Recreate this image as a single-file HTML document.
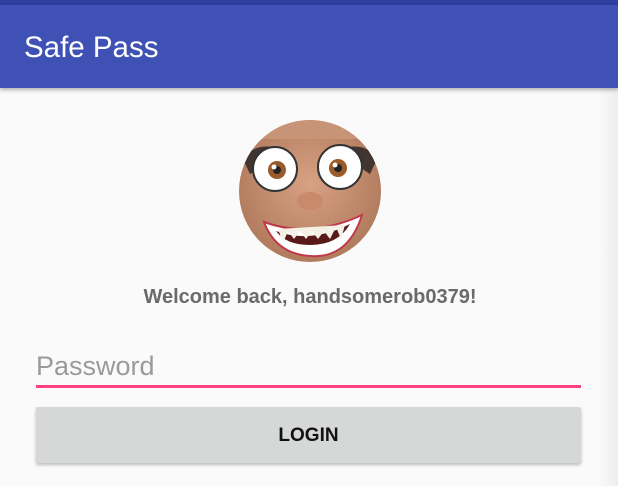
<!DOCTYPE html>
<html><head><meta charset="utf-8"><style>
html,body{margin:0;padding:0}
body{width:618px;height:486px;overflow:hidden;background:#fafafa;position:relative;font-family:"Liberation Sans",Roboto,sans-serif}
.sb{position:absolute;left:0;top:0;width:618px;height:5px;background:#303f9f}
.tb{position:absolute;left:0;top:5px;width:618px;height:83px;background:#3f51b5;box-shadow:0 2px 4px rgba(0,0,0,.3)}
.tb span{position:absolute;left:24px;top:26px;color:#fff;font-size:29.5px}
.edge{position:absolute;right:0;top:88px;width:20px;height:398px;background:linear-gradient(to right,rgba(0,0,0,0),rgba(0,0,0,.05))}
.wel{position:absolute;left:0;width:620px;top:286px;text-align:center;font-weight:bold;font-size:20px;color:#6a6a6a}
.pw{position:absolute;left:36px;top:351px;font-size:27px;color:#9a9a9a}
.line{position:absolute;left:36px;top:385px;width:545px;height:3px;background:#ff4081}
.btn{position:absolute;left:36px;top:407px;width:545px;height:56px;background:#d6d7d7;border-radius:2px;box-shadow:0 2px 3px rgba(0,0,0,.25);text-align:center;line-height:57px;font-size:19px;font-weight:bold;color:#111}
</style></head><body>
<div class="sb"></div>
<div class="tb"><span>Safe Pass</span></div>
<div class="edge"></div>
<svg style="position:absolute;left:238px;top:119px" width="144" height="144" viewBox="0 0 144 144">
<defs><radialGradient id="g" cx="50%" cy="45%" r="55%"><stop offset="0" stop-color="#d9a184"/><stop offset="1" stop-color="#b07a5c"/></radialGradient><clipPath id="c"><circle cx="72" cy="72" r="71"/></clipPath></defs>
<g clip-path="url(#c)">
<rect width="144" height="144" fill="url(#g)"/>
<rect x="0" y="0" width="144" height="20" fill="#c89478"/>
<path d="M5 40 Q15 25 35 28 Q30 45 12 55Z" fill="#222" opacity=".8"/>
<path d="M139 40 Q130 25 110 28 Q115 45 132 55Z" fill="#222" opacity=".8"/>
<circle cx="37" cy="50" r="22" fill="#fff" stroke="#333" stroke-width="2"/>
<circle cx="102" cy="48" r="22" fill="#fff" stroke="#333" stroke-width="2"/>
<circle cx="39" cy="51" r="9" fill="#9a5a2a"/><circle cx="39" cy="51" r="4" fill="#222"/><circle cx="36" cy="48" r="2.5" fill="#fff"/>
<circle cx="100" cy="49" r="9" fill="#9a5a2a"/><circle cx="100" cy="49" r="4" fill="#222"/><circle cx="97" cy="46" r="2.5" fill="#fff"/>
<ellipse cx="72" cy="82" rx="13" ry="9" fill="#c98a6c"/>
<path d="M26 103 Q72 120 124 96 Q110 140 72 137 Q38 135 26 103Z" fill="#fff" stroke="#c0394a" stroke-width="2"/>
<path d="M38 112 Q72 125 112 105 Q100 126 72 126 Q48 126 38 112Z" fill="#5a1a1a"/>
<path d="M40 110 l5 14 l5 -12 l6 8 l6 -8 l6 8 l6 -8 l6 8 l6 -8 l6 8 l6 -12 l5 12 l4 -14Z" fill="#f4f0e6"/>
</g></svg>
<div class="wel">Welcome back, handsomerob0379!</div>
<div class="pw">Password</div>
<div class="line"></div>
<div class="btn">LOGIN</div>
</body></html>
